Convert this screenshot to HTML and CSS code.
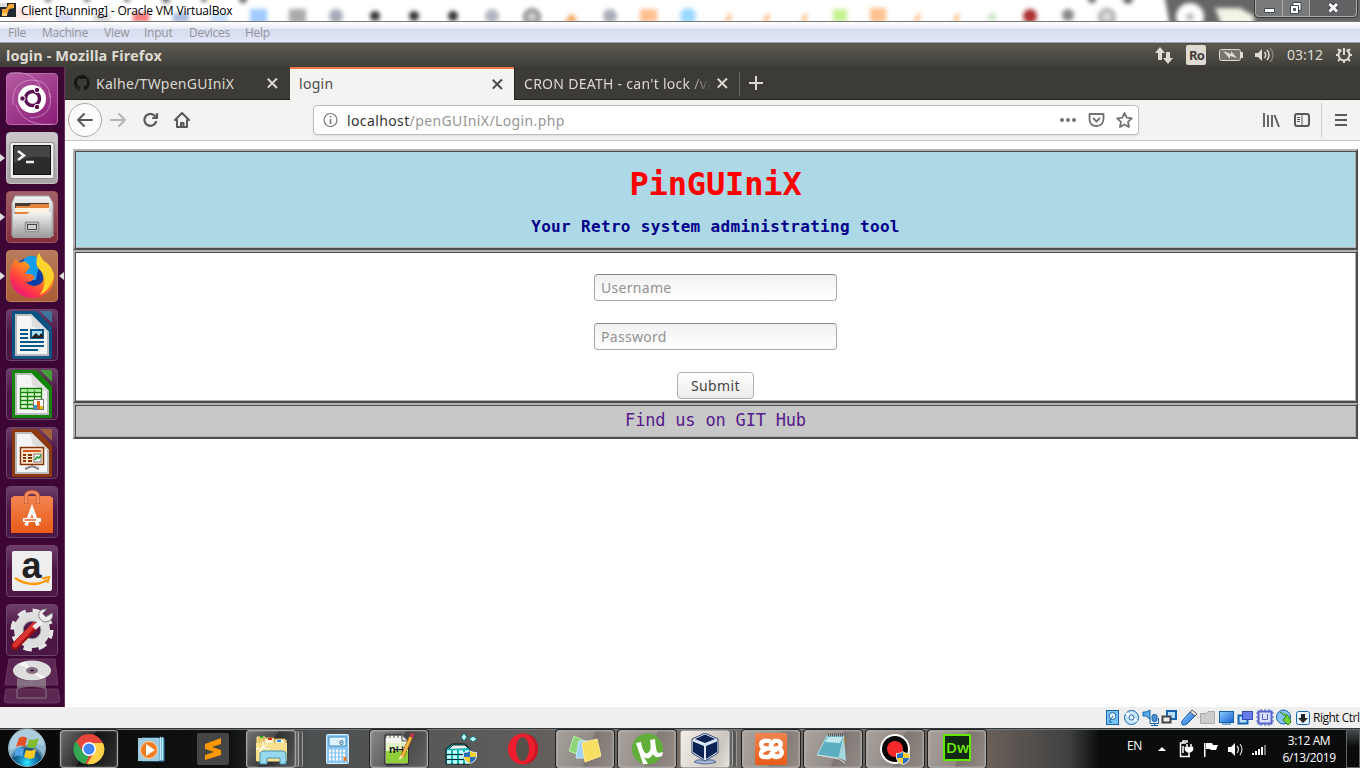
FILE: index.html
```html
<!DOCTYPE html>
<html lang="en">
<head>
<meta charset="utf-8">
<title>login</title>
<link rel="stylesheet" href="styles.css">
</head>
<body>
<svg class="defs" aria-hidden="true"><defs>
<filter id="soft" x="-50%" y="-50%" width="200%" height="200%"><feGaussianBlur stdDeviation="2"/></filter>
<linearGradient id="silver" x2="0" y2="1"><stop stop-color="#f4f4f4"/><stop offset="1" stop-color="#999"/></linearGradient>
<linearGradient id="orange" x2="0" y2="1"><stop stop-color="#f28450"/><stop offset="1" stop-color="#e95b18"/></linearGradient>
<radialGradient id="orb" cx=".5" cy=".9"><stop stop-color="#2ff0ff"/><stop offset=".35" stop-color="#1791c7"/><stop offset=".75" stop-color="#195079"/><stop offset="1" stop-color="#8cbbd2"/></radialGradient>
<linearGradient id="fox" x1=".9" y1="0" x2=".2" y2="1"><stop stop-color="#fff44f"/><stop offset=".4" stop-color="#ff9a1a"/><stop offset=".75" stop-color="#ff3647"/><stop offset="1" stop-color="#e31587"/></linearGradient>
<linearGradient id="blue" x2="1" y2="1"><stop stop-color="#8fd0ff"/><stop offset="1" stop-color="#1560d0"/></linearGradient>
<g id="shield"><path d="M0 2Q5 2 7 0Q9 2 14 2V7Q13 12 7 14Q1 12 0 7Z" fill="#ddd"/><path d="M1 3Q5 3 7 1V7H1Z" fill="#2670bd"/><path d="M7 1Q9 3 13 3V7H7Z" fill="#f7cf31"/><path d="M1 7H7V13Q2 11 1 7Z" fill="#f7cf31"/><path d="M7 7H13Q12 11 7 13Z" fill="#2670bd"/></g>
<g id="paper"><path d="M7 3H30L45 19V49H7Z" stroke="currentColor" stroke-width="2" stroke-linejoin="round" fill="currentColor"/><path d="M9 5H25L43 23V47H9Z" fill="#b9bcbd"/><path d="M11 7H24L41 24V45H11Z" fill="#f5f5f5"/><path d="M25 5L43 23H38L26 17Z" fill="#dedede"/><path d="M34 2H44Q46 2 46 4V14Z" fill="currentColor"/><path d="M34 2H44Q46 2 46 4V14Z" fill="#fff" opacity=".2"/></g>
</defs></svg>

<header class="win-title">
  <svg class="title-haze" viewBox="0 0 1360 21" width="1360" height="21">
    <path d="M1164-6H1366V27H1170Q1168 14 1164-6Z" fill="#666" filter="url(#soft)"/>
    <g filter="url(#soft)">
      <rect x="12" y="8" width="24" height="12" fill="#ffe6e6"/><rect x="56" y="14" width="16" height="7" fill="#d4d4f8"/><rect x="94" y="14" width="16" height="7" fill="#ccc"/><rect x="133" y="13" width="16" height="9" fill="#f47777"/><rect x="173" y="13" width="16" height="9" fill="#a6bade"/><rect x="211" y="13" width="17" height="9" fill="#c6defc"/>
      <rect x="250" y="9" width="17" height="14" fill="#a0cbff"/><rect x="289" y="9" width="17" height="14" fill="#aaa"/><circle cx="336" cy="16" r="7" fill="#a5abb6"/><circle cx="375" cy="16" r="5" fill="#333"/><circle cx="414" cy="16" r="5" fill="#333"/><circle cx="453" cy="16" r="5" fill="#333"/><circle cx="492" cy="16" r="7" fill="#b2b5c0"/><circle cx="532" cy="17" r="7" fill="#ccc" stroke="#888" stroke-width="4"/><path d="M564 22L572 13L578 22Z" fill="#efa45c"/><circle cx="610" cy="16" r="7" fill="#aaadb7"/>
      <rect x="640" y="9" width="17" height="13" fill="#ffc08f"/><circle cx="688" cy="16" r="8" fill="#99d7ff"/><path d="M724 21L731 12V21ZM762 21L769 12V21ZM800 21L807 12V21Z" fill="#ffb77c"/><rect x="833" y="9" width="14" height="13" fill="#c4f291"/><rect x="870" y="8" width="16" height="14" fill="#ffc18e"/><path d="M913 21L920 12V21ZM952 21L959 12V21Z" fill="#ffb77c"/><path d="M986 20L993 11L998 20Z" fill="#cbe3c5"/><circle cx="1030" cy="16" r="7" fill="#aa3030"/><circle cx="1068" cy="15" r="6" fill="#888"/><circle cx="1107" cy="17" r="7" fill="#ddd" stroke="#aaa" stroke-width="4"/><circle cx="1190" cy="17" r="14" fill="#fff"/><circle cx="1190" cy="17" r="4" fill="#bbb"/><path d="M1215 8H1240L1254 16V26H1222Z" fill="#f3f3e6"/>
      <g fill="#666"><circle cx="48" cy="-1" r="3"/><circle cx="87" cy="-1" r="3"/><circle cx="127" cy="-1" r="3"/><circle cx="166" cy="-1" r="4"/><circle cx="204" cy="-1" r="3"/><circle cx="243" cy="-1" r="4"/><circle cx="1092" cy="-1" r="4"/><circle cx="1128" cy="-1" r="5"/></g>
    </g>
  </svg>
  <svg width="16" height="17" viewBox="0 0 16 17"><rect y="3" width="16" height="14" fill="#21272f"/><path d="M2 15H7L9 9L14 8V4H9L6 9H2Z" fill="#f8a636"/><path d="M0 3H7V7H0Z" fill="#ddd"/><path d="M2 13H7V16H2Z" fill="#ffd36a"/></svg>
  <span class="win-caption">Client [Running] - Oracle VM VirtualBox</span>
  <div class="win-buttons">
    <svg width="104" height="19" viewBox="0 0 104 19"><path d="M.5 0V14Q.5 17.500 4 17.500H100Q103.500 17.500 103.500 14V0" fill="#77797b" stroke="#393939"/><path d="M56 0H102V16H56Z" fill="#606264"/><path d="M1.500 0V13Q1.500 16.500 5 16.500H99Q102.500 16.500 102.500 13V0M28.500 0V17M55.500 0V17" fill="none" stroke="#aaa"/><path d="M10.500 8.500H20.500V12.500H10.500Z" fill="#fff" stroke="#414657"/><path d="M39 2.500H47V10.500H39Z" fill="#fff" stroke="#414657"/><path d="M36.500 5.500H44.500V13.500H36.500Z" fill="#fff" stroke="#414657"/><path d="M39.500 8.500H41.500V10.500H39.500Z" fill="#777" stroke="#414657"/><path d="M75.500 4L83 11.500M83 4L75.500 11.500" stroke="#3f4352" stroke-width="5"/><path d="M75.500 4L83 11.500M83 4L75.500 11.500" stroke="#fff" stroke-width="3"/></svg>
  </div>
</header>
<nav class="win-menu"><span class="m1">File</span><span class="m2">Machine</span><span class="m3">View</span><span class="m4">Input</span><span class="m5">Devices</span><span class="m6">Help</span></nav>

<main class="vm">
  <div class="panel">
    <span class="panel-title">login - Mozilla Firefox</span>
    <svg width="210" height="24" viewBox="0 0 210 24" fill="#dfdbd2">
      <path d="M0 10L5 4L10 10H7V17H3V10ZM8 15H11V9H15V15H18L13 21Z"/>
      <rect x="31" y="2" width="20" height="20" rx="2"/><text x="34" y="17" class="ro">Ro</text>
      <rect x="64.500" y="6.500" width="21" height="11" rx="2" fill="#77756f" stroke="#dfdbd2"/><path d="M86 9H88V15H86ZM68 8L76 11V8L82 15L75 13V16Z"/>
      <path d="M100 10H103L107 6V18L103 14H100Z"/><path d="M109.500 9Q112 12 109.500 15M112 7Q116 12 112 17" fill="none" stroke="#dfdbd2" stroke-width="1.500"/><path d="M115 5Q121 12 115 19" fill="none" stroke="#85827b" stroke-width="1.500"/>
      <text x="132" y="17" class="clock" textLength="36">03:12</text>
      <g transform="translate(189 12)" fill="none" stroke="#dfdbd2"><path d="M-2.500-5A5.500 5.500 0 1 0 2.500-5" stroke-width="2"/><path d="M0-7V0" stroke-width="2"/><path d="M-8 0H-5M5 0H8M0 5V8M-6-6L-4-4M6-6L4-4M-6 6L-4 4M6 6L4 4" stroke-width="2"/></g>
    </svg>
  </div>
  <div class="desktop">
    <aside class="launcher">
      <div class="tile dash"><svg viewBox="0 0 52 52"><g fill="none" stroke="#dca4d4" opacity=".65"><path d="M7 32Q5 8 26 7Q44 7 44 25M44 20Q48 44 24 45M4 0Q29-4 37 20M46 51Q18 54 10 32"/></g><circle cx="26" cy="26" r="14" fill="#fff"/><circle cx="26.500" cy="25.500" r="7" fill="none" stroke="#5b1052" stroke-width="3.500"/><g fill="#5b1052" stroke="#fff"><circle cx="16.500" cy="25.500" r="2.700"/><circle cx="31" cy="17" r="2.700"/><circle cx="31" cy="34" r="2.700"/></g></svg></div>
      <div class="tile terminal running"><svg viewBox="0 0 52 52"><rect x="4" y="10.500" width="44" height="36" rx="2" fill="#eee" stroke="#888"/><rect x="7.500" y="13.500" width="37" height="29" fill="#2c2c2c" stroke="#111"/><path d="M8 14H44V26Q25 22 8 31Z" fill="#555" opacity=".6"/><path d="M12 19L18 23.500L12 28M20 30H28" fill="none" stroke="#eee" stroke-width="2.500"/></svg></div>
      <div class="tile files running"><svg viewBox="0 0 52 52"><path d="M9 5H43L47 12V45H6V12Z" fill="url(#silver)" stroke="#aaa"/><rect x="9" y="12" width="34" height="13" fill="#463b35"/><path d="M10 15H23L25 13H43V24H9Z" fill="#e6843f"/><path d="M9 17H43V21H9Z" fill="#fff2dc"/><path d="M7 23H21L24 21H45V47H7Z" fill="url(#silver)"/><rect x="19.500" y="31.500" width="13" height="9" rx="1" fill="#eee" stroke="#999" stroke-width="2"/><rect x="21.500" y="33.500" width="9" height="5" fill="#ccc" stroke="#444"/></svg></div>
      <div class="tile firefox running focused"><svg viewBox="0 0 52 52"><circle cx="26" cy="26" r="19" fill="#063da9"/><path d="M18 9Q26 2 34 10L30 30H12Z" fill="#149dea"/><path d="M10 8Q11 14 15 12Q20 10 24 17L19 24Q25 23 29 27Q25 34 19 31Q26 39 34 34Q40 30 35 21Q27 15 33 3Q35 10 42 14Q49 21 48 29C46 43 36 49 25 48C12 47 4 38 4 27Q4 15 10 8Z" fill="url(#fox)"/><path d="M33 3Q35 10 42 14Q48 21 47 29Q42 42 34 45Q42 32 36 22Q27 14 33 3Z" fill="#ffd42a"/></svg></div>
      <div class="tile writer"><svg viewBox="0 0 52 52"><use href="#paper"/><path d="M14 21H22M14 25H22M14 29H22M14 33H38M14 37H38M14 41H32" stroke="#075989" stroke-width="2"/><rect x="25" y="21" width="12" height="8" fill="#a9dcfa" stroke="#075989" stroke-width="2"/><path d="M26 28L30 24L33 27L35 24L37 26V29H26Z" fill="#222"/></svg></div>
      <div class="tile calc"><svg viewBox="0 0 52 52"><use href="#paper"/><path d="M14.500 20.500H35.500V40.500H14.500ZM14.500 24.500H35.500M14.500 28.500H35.500M14.500 32.500H35.500M14.500 36.500H35.500M21.500 20V41M28.500 20V41" fill="#e5ffdc" stroke="#168009" stroke-width="1.300"/><path d="M15 21H35V24H15Z" fill="#7fdf68" opacity=".5"/><rect x="27.500" y="31.500" width="10" height="10" fill="#fff" stroke="#777"/><path d="M28 37H31V41H28Z" fill="#2d95d9"/><path d="M31 33H34V41H31Z" fill="#e5661b"/><path d="M34 38H37V41H34Z" fill="#e3bb00"/></svg></div>
      <div class="tile impress"><svg viewBox="0 0 52 52"><use href="#paper"/><path d="M14.500 20.500H37.500V37.500H14.500Z" fill="#ffe5cc" stroke="#843409" stroke-width="1.500"/><path d="M17 24H35" stroke="#d6551a" stroke-width="2"/><path d="M17 28H20M17 31H20M17 34H20M22 28H26M22 31H26M22 34H26" stroke="#843409" stroke-width="2"/><rect x="28" y="27" width="7" height="8" fill="#fff" stroke="#777"/><path d="M29 33L31 30L33 31L35 28" stroke="#219e35" fill="none" stroke-width="1.500"/><path d="M26 38V39L19 42M26 39L33 42" stroke="#888" stroke-width="2" fill="none"/></svg></div>
      <div class="tile software"><svg viewBox="0 0 52 52"><path d="M5 12L8 10H44L47 12V47H5Z" fill="url(#orange)"/><path d="M20 18V11Q20 6 26 6Q32 6 32 11V18" fill="none" stroke="#d86735" stroke-width="4"/><path d="M20 17V11Q20 6 26 6Q32 6 32 11V17" fill="none" stroke="#f49169" stroke-width="2"/><path d="M20 39.500L26 23L32 39.500" fill="none" stroke="#fff" stroke-width="3.500"/><path d="M17 34H35" stroke="#fff" stroke-width="4"/><path d="M18.500 34H30" stroke="#ed682d" stroke-width="1.600"/></svg></div>
      <div class="tile amazon"><svg viewBox="0 0 52 52"><rect x="6" y="6" width="40" height="40" rx="2" fill="#eee"/><text x="15.500" y="33" class="amazon-letter">a</text><path d="M9 33Q26 44 41 35" stroke="#ff9900" stroke-width="2.500" fill="none"/><path d="M36 33.500L43 32L41.500 38" stroke="#ff9900" stroke-width="2" fill="none"/></svg></div>
      <div class="tile settings"><svg viewBox="0 0 52 52"><circle cx="26" cy="26" r="18.500" fill="none" stroke="#e5e5e5" stroke-width="6" stroke-dasharray="8 6.530"/><circle cx="26" cy="26" r="13.500" fill="none" stroke="#dedede" stroke-width="9"/><circle cx="26" cy="26" r="9" fill="none" stroke="#aaa"/><path d="M9 42L29 22" stroke="#9e0f0f" stroke-width="7.500" stroke-linecap="round"/><path d="M9 41L28 21" stroke="#d93232" stroke-width="5" stroke-linecap="round"/><path d="M28 24L38 15" stroke="#eee" stroke-width="5"/><path d="M41 5Q31 5 33 13Q36 20 43 17Q48 14 46 9L40 13L36.500 9.500Z" fill="#ededed" stroke="#888"/></svg></div>
      <div class="disc"><svg viewBox="0 0 58 46"><path d="M6 1H52L55 27H2ZM3 31H55L57 42Q57 45 54 45H4Q1 45 1 42Z" fill="#a77c9c" opacity=".3" stroke="#d7a9d1"/><ellipse cx="29" cy="12.500" rx="19" ry="10" fill="#ddd"/><path d="M29 12L15 6L22 4ZM29 13L43 19L38 21Z" fill="#f8f8f8"/><ellipse cx="29" cy="12.500" rx="6" ry="3.500" fill="#877184"/><ellipse cx="29" cy="12.500" rx="2" ry="1" fill="#401038"/><path d="M14 31V40M43 31V40M14 40H43" stroke="#aaa" opacity=".6"/><path d="M14 20Q28 26 43 20V31Q28 27 14 31Z" fill="#aaa" opacity=".55"/></svg></div>
    </aside>
    <section class="browser">
      <div class="tabs">
        <div class="tab"><svg class="github" viewBox="0 0 16 16"><path d="M8 0C3.580 0 0 3.580 0 8c0 3.540 2.290 6.530 5.470 7.590.4.070.55-.17.55-.38V13.700c-2.230.48-2.690-1.070-2.690-1.070-.36-.92-.89-1.170-.89-1.170-.73-.5.050-.49.050-.49.8.06 1.230.83 1.230.83.72 1.220 1.870.87 2.330.66.07-.52.28-.87.51-1.070-1.780-.2-3.640-.89-3.640-3.950 0-.87.31-1.590.82-2.150-.08-.2-.36-1.020.08-2.120 0 0 .67-.21 2.200.82a7.600 7.600 0 0 1 4 0c1.530-1.040 2.200-.82 2.200-.82.44 1.100.16 1.920.08 2.120.51.56.82 1.270.82 2.150 0 3.070-1.870 3.750-3.650 3.950.29.25.54.73.54 1.480v2.200c0 .21.15.46.55.38A8 8 0 0 0 8 0Z" fill="#161616"/></svg><span class="tab-label t1">Kalhe/TWpenGUIniX</span><i class="close"></i></div>
        <div class="tab active"><span class="tab-label t2">login</span><i class="close"></i></div>
        <div class="tab last"><span class="tab-label t3">CRON DEATH - can't lock /var</span><i class="close"></i></div>
        <i class="plus"></i>
      </div>
      <div class="toolbar">
        <svg class="nav-icons" width="130" height="40" viewBox="0 0 130 40"><circle cx="20" cy="20" r="16.500" fill="#fcfcfc" stroke="#aaa8a6"/><g fill="none" stroke="#5a5957" stroke-width="2" stroke-linecap="round" stroke-linejoin="round"><path d="M27 20H13M19 14L13 20L19 26"/><path d="M46 20H60M54 14L60 20L54 26" stroke="#b7b5b3"/><path d="M90 16A6 6 0 1 0 91 22M92 14V18H88" stroke-width="2.200"/><path d="M110 20L117 13L124 20M112 20V27H122V20M116 27V23H118.500V27"/></g></svg>
        <div class="address">
          <svg width="16" height="16" viewBox="0 0 16 16"><circle cx="7.500" cy="8" r="6.500" fill="none" stroke="#777" stroke-width="1.200"/><path d="M7.500 7V12M7.500 4V5.500" stroke="#777" stroke-width="1.600"/></svg>
          <span class="url">localhost<span>/penGUIniX/Login.php</span></span>
          <svg class="address-icons" width="74" height="20" viewBox="0 0 74 20"><g fill="#737373"><circle cx="2" cy="10" r="2"/><circle cx="8" cy="10" r="2"/><circle cx="14" cy="10" r="2"/></g><g fill="none" stroke="#737373" stroke-width="1.800" stroke-linejoin="round"><path d="M29.500 4H43.500V9Q43 16 36.500 16Q29.500 16 29.500 9Z"/><path d="M33 8L36.500 11.500L40 8"/><path d="M64.500 3L66.700 7.700L71.800 8.300L68 11.800L69 17L64.500 14.500L60 17L61 11.800L57.200 8.300L62.300 7.700Z"/></g></svg>
        </div>
        <svg class="toolbar-icons" width="98" height="40" viewBox="0 0 98 40"><path d="M2 13V27M6 15V27M10 15V27M12.500 15L17 27" stroke="#5a5957" stroke-width="1.800"/><rect x="33" y="14" width="14" height="12" rx="2" fill="none" stroke="#5a5957" stroke-width="2"/><path d="M40 14V26M35 17.500H38M35 19.500H38M35 21.500H38" stroke="#5a5957"/><path d="M59.500 3V37" stroke="#cfcdcb"/><path d="M73 15H85M73 20H85M73 25H85" stroke="#5a5957" stroke-width="2"/></svg>
      </div>
      <div class="page">
        <div class="box hero"><h1>PinGUIniX</h1><h2>Your Retro system administrating tool</h2></div>
        <form class="box login"><input type="text" placeholder="Username"><input type="password" placeholder="Password"><button type="button">Submit</button></form>
        <div class="box foot"><a>Find us on GIT Hub</a></div>
      </div>
    </section>
  </div>
</main>

<div class="status">
  <svg width="209" height="21" viewBox="0 0 209 21" fill="none" stroke="#1764ae">
    <g><rect x="2.500" y="3.500" width="12" height="14" fill="#78c5f6"/><circle cx="8.500" cy="9" r="3.500" fill="#e5f6ff"/><path d="M9 9L5 15H8"/></g>
    <g><circle cx="27.500" cy="10.500" r="7" fill="#c7e7fd"/><path d="M22 6L27 10L33 14" stroke="#fff" stroke-width="2"/><circle cx="27.500" cy="10.500" r="2.500" fill="#fff"/></g>
    <path d="M39 5H42L46 3V12L42 9H39Z" fill="#5babe9"/><rect x="48" y="7.500" width="5" height="7" rx="2" fill="#4f8fd0"/><path d="M46 11V16.500H54.500V11M50.500 17V19M47 18.500H54"/>
    <rect x="63" y="4" width="9" height="8" fill="#b6dfff" stroke-width="2"/><rect x="58.500" y="9.500" width="8" height="6" fill="#eee" stroke="#444" stroke-width="2"/>
    <path d="M78 14L86 5L91 9L83 17Q76 20 78 14Z" fill="url(#blue)"/><path d="M86 5L88 3L93 7L91 9Z" fill="#eee" stroke="#555"/>
    <path d="M96.500 16.500V6.500H102L104 4.500H110.500V16.500Z" fill="#ccc" stroke="#aaa"/>
    <rect x="115.500" y="4.500" width="14" height="11" fill="url(#blue)"/><path d="M118 17H127"/>
    <rect x="134.500" y="8.500" width="9" height="8" fill="#b6dfff" stroke-width="2"/><rect x="138.500" y="4.500" width="10" height="8" fill="#677bea" stroke="#3545b5"/>
    <rect x="154.500" y="4.500" width="13" height="12" fill="#dce0ff" stroke="#5562ca" stroke-width="2"/><path d="M152 6H154M152 10H154M152 14H154M168 6H170M168 10H170M168 14H170M157 2V4M161 2V4M165 2V4M157 17V19M161 17V19M165 17V19M158.500 7V12.500H163.500V7" stroke="#5562ca"/>
    <circle cx="179.500" cy="10" r="7" fill="#88bff5"/><path d="M176 5L182 9L179 13L184 18L187 15L185 10L182 7" fill="#79d13a" stroke="#267c22"/>
    <rect x="192.500" y="4.500" width="13" height="13" rx="2" fill="#eaf4ff"/><path d="M197 7H201V11H204L199 16L194 11H197Z" fill="#222" stroke="none"/>
  </svg><span>Right Ctrl</span>
</div>

<footer class="taskbar">
  <div class="start"><svg width="40" height="40" viewBox="0 0 40 40"><circle cx="20" cy="20" r="18.500" fill="url(#orb)" stroke="#91aebc"/><path d="M3 17A17 17 0 0 1 37 17Q22 15 3 22Z" fill="#dcecf3" opacity=".4"/><path d="M12 10Q16 7 20 10L18 19Q14 16 9 19Z" fill="#e65124"/><path d="M22 11Q26 13 32 10L29 19Q25 21 20 19Z" fill="#82bd34"/><path d="M9 21Q13 18 17 21L15 29Q11 26 7 29Z" fill="#52a6e7"/><path d="M19 22Q24 24 29 21L27 30Q22 32 17 29Z" fill="#ffc922"/></svg></div>
  <div class="task dark on"><svg viewBox="0 0 32 32"><circle cx="16" cy="16" r="15" fill="#e8453c"/><path d="M3 8L11 20L16 23L12 31A15 15 0 0 1 3 8Z" fill="#35a853"/><path d="M30 10H17L22 18L14 31A15 15 0 0 0 30 10Z" fill="#ffd348"/><circle cx="16" cy="16" r="7" fill="#fff"/><circle cx="16" cy="16" r="5.500" fill="#4286f5"/></svg></div>
  <div class="task"><svg viewBox="0 0 32 32"><path d="M7 5H29V28H7Z" fill="#75b9db" stroke="#3684b6"/><path d="M25.500 4V27M27.500 4V27" stroke="#c4eaff"/><rect x="3" y="5" width="21" height="23" fill="#9fcbe0"/><circle cx="14" cy="17" r="8.500" fill="#f17b20" stroke="#ffd4a8"/><path d="M11 11L20 17L11 23Z" fill="#fff"/></svg></div>
  <div class="task"><svg viewBox="0 0 32 32"><rect width="32" height="32" rx="2" fill="#454545"/><path d="M8 11L24 5V11L15 14L24 17V22L8 27V22L17 19L8 16Z" fill="#ff9800"/></svg></div>
  <div class="task on stacked"><svg viewBox="0 0 32 32"><path d="M2 4H10L12 7H31V28H2Z" fill="#e9c865" stroke="#ffe89b"/><path d="M9 5H19V11H9ZM20 6H30V12H20Z" fill="#fff4d0" stroke="#c5a64b"/><path d="M5 3H8V5H5Z" fill="#1aaa1a"/><path d="M13 5H17V7H13Z" fill="#e12a1d"/><path d="M22 7H26V9H22Z" fill="#2394eb"/><path d="M1 10H32V28H1Z" fill="#f8df8d"/><path d="M5 31V21Q5 18 10 18H27Q31 18 31 21V31H25V25H12V31Z" fill="#96d8ec" stroke="#4695b1"/><path d="M4 19L8 15M8 15V8M8 15L15 16M8 15L1 16M8 15L13 10" stroke="#fff"/></svg></div>
  <div class="task"><svg viewBox="0 0 32 32"><rect x="5.500" y="1.500" width="22" height="29" rx="1" fill="#8ac5f3" stroke="#d7efff"/><rect x="8" y="4" width="17" height="9" fill="#def4ff" stroke="#418cb9"/><text x="18" y="12" class="zero">0</text><path d="M8 18H25M8 22H25M8 26H25" stroke="#fff" stroke-width="3" stroke-dasharray="2 1.500"/><path d="M24 24V28" stroke="#ef7c20" stroke-width="3"/></svg></div>
  <div class="task on"><svg viewBox="0 0 32 32"><path d="M2 2H19L25 8V31H2Z" fill="#f4f4ee" stroke="#111"/><path d="M3 13H25V30H3Z" fill="#8fcf38"/><path d="M3 10H25V18H3Z" fill="#e1f2c4"/><path d="M3 2V5M7 2V5M11 2V5M15 2V5M19 2V5" stroke="#555"/><path d="M19 2V8H25" fill="#ddd" stroke="#555"/><text x="6" y="20" class="npp">n++</text><path d="M19 24L28 4" stroke="#a86a16" stroke-width="4"/><path d="M19 24L28 4" stroke="#f9ba45" stroke-width="2.500"/><path d="M28 4L30 0" stroke="#b8334b" stroke-width="4"/><path d="M16 27L17 22L20.500 24Z" fill="#ffe4aa"/></svg></div>
  <div class="task"><svg viewBox="0 0 32 32"><path d="M1 16L7 11H20L25 16V31H1Z" fill="#14b4b2" stroke="#021b1b"/><path d="M2 19H24M2 24H24M2 29H24" stroke="#c5ffff" stroke-width="3.500" stroke-dasharray="4 2"/><path d="M4 16L8 12H20L23 15" fill="#eee" stroke="#063232"/><path d="M1 21.500H24M1 26.500H24" stroke="#063232"/><path d="M16 4L19 .5L22 4L19 8ZM24 6L28 3L32 6L28 9Z" fill="#bdf8f4" stroke="#087b7d"/><use href="#shield" x="18" y="17"/></svg></div>
  <div class="task"><svg viewBox="0 0 32 32"><ellipse cx="16" cy="16" rx="15" ry="15.500" fill="#ee1e2f"/><ellipse cx="15.500" cy="16" rx="6.500" ry="12" fill="#56504b"/><path d="M19 1Q31 3 31 16Q30 29 18 31Q30 24 28 12Q26 4 19 1Z" fill="#a90d19" opacity=".55"/></svg></div>
  <div class="task on light"><svg viewBox="0 0 32 32"><path d="M5 3L18 9L13 23L0 18Z" fill="#8ed57b" stroke="#b6efa7"/><path d="M10 8H24V25H7Z" fill="#9fd0f6" stroke="#cbeaff"/><path d="M13 10L28 6L32 23L16 29Z" fill="#f7df61" stroke="#ffed90"/></svg></div>
  <div class="task on light"><svg viewBox="0 0 32 32"><circle cx="16.500" cy="16" r="15.500" fill="#62ae3a"/><path d="M5 10L10 9Q12 22 17 20Q21 18 19 7L24 6Q25 21 28 20L32 19L31 23Q24 26 22 21Q18 28 13 24L17 31H12Z" fill="#fff"/></svg></div>
  <div class="task on stacked white"><svg viewBox="0 0 32 32"><path d="M8 27H24L27 29Q16 33 5 29Z" fill="#aab8d7" stroke="#536d99"/><path d="M3 6L16 0L29 6V20L16 28L3 20Z" fill="#dce5f6" stroke="#364d78"/><path d="M6 6L16 1.500L26 6L16 10ZM4 8.500L15 13V26L4 19ZM17 13L28 8.500V19L17 26Z" fill="#0b2454"/></svg></div>
  <div class="task on light"><svg viewBox="0 0 32 32"><rect width="32" height="32" rx="2" fill="url(#orange)"/><path d="M14 8H9Q5 9 7 14L11 16L7 18Q4 24 10 24H14L17 20H21M16 12L19 8H23Q28 10 24 15Q29 19 25 23Q22 25 18 23M11 15.500H24" fill="none" stroke="#fff" stroke-width="4.500" stroke-linejoin="round" stroke-linecap="round"/><path d="M11 11H12M11 20H12M21 11H22M21 20H22" stroke="#ee6e32" stroke-width="2" stroke-linecap="round"/></svg></div>
  <div class="task on light"><svg viewBox="0 0 32 32"><path d="M25 5L29 4L27 28L22 24Z" fill="#9c722e"/><path d="M10 3H27L22 25L0 22Z" fill="#5dafc0" stroke="#a9e1e8"/><path d="M11 4H26L23 10L8 9Z" fill="#c0e9ef"/><path d="M11 2H27" stroke="#555" stroke-width="3" stroke-dasharray="1"/><path d="M27 4L29 28L22 25Z" fill="#a6d6de"/><path d="M1 22L22 26L28 30" stroke="#ddd" fill="none"/></svg></div>
  <div class="task on light"><svg viewBox="0 0 32 32"><circle cx="16" cy="16" r="15" fill="#fff"/><circle cx="16" cy="16" r="13" fill="#050505"/><circle cx="16" cy="16" r="8" fill="#f3292c"/><use href="#shield" x="17" y="18"/></svg></div>
  <div class="task on light"><svg viewBox="0 0 32 32"><rect x="3" y="2" width="26" height="25" fill="#122913" stroke="#62e900" stroke-width="2"/><text x="5" y="20" class="dw" textLength="23" lengthAdjust="spacingAndGlyphs">Dw</text></svg></div>
  <div class="tray">
    <span class="lang">EN</span>
    <svg width="115" height="40" viewBox="0 0 115 40"><path d="M4 22L8 18L12 22Z" fill="#fff"/><g fill="none" stroke="#fff" stroke-width="1.500"><path d="M32 14H26.500V27.500H36M29 14V12H33V14M29 17V24"/><path d="M33 15V18M37 15V18M31.500 18.500H38.500V21Q35 25 31.500 21ZM35 23V27" fill="#fff"/></g><path d="M50 14H51.500V28H50ZM52 14H58L59 16H64L62 21H57L56 20H52Z" fill="#fff"/><path d="M74 18H77L81 14V27L77 23H74Z" fill="#fff"/><path d="M83 17Q86 20 83 24M86 15Q90 20 86 26" fill="none" stroke="#ddd" stroke-width="1.200"/><path d="M98 24H100V26H98ZM101 22H103V26H101ZM104 20H106V26H104ZM107 18H109V26H107Z" fill="#fff"/><path d="M110 16H112V26H110Z" fill="#777"/></svg>
    <div class="date"><span>3:12 AM</span><span>6/13/2019</span></div>
    <div class="peek"></div>
  </div>
</footer>
</body>
</html>
```
FILE: styles.css
```css
* { box-sizing: border-box; }
body { margin: 0; width: 1360px; height: 768px; overflow: hidden; display: flex; flex-direction: column; font-family: "Noto Sans", "Open Sans", sans-serif; background: #fff; }
svg { display: block; flex: none; }
.defs { position: absolute; width: 0; height: 0; }
.win-title { position: relative; height: 22px; flex: none; display: flex; border-bottom: 1px solid #777; background: #fff; }
.title-haze { position: absolute; left: 0; top: 0; }
.win-title > svg:not(.title-haze), .win-caption, .win-buttons { position: relative; }
.win-caption { margin-left: 5px; font: 12px/21px "Open Sans", sans-serif; letter-spacing: -.16px; white-space: nowrap; color: #000; }
.win-buttons { margin-left: auto; padding-right: 2px; }
.win-menu { height: 21px; flex: none; display: flex; padding-left: 8px; background: linear-gradient(#fff, #e6eaf3 7px, #d5dbee 7px, #e1e7f7 20px); border-bottom: 1px solid #9ba8ba; font: 12px/21px "Open Sans", sans-serif; letter-spacing: -.25px; color: #94959a; }
.m1 { width: 34px; } .m2 { width: 62px; } .m3 { width: 40px; } .m4 { width: 45px; } .m5 { width: 56px; }

.vm { height: 664px; flex: none; }
.panel { height: 24px; display: flex; justify-content: space-between; padding-left: 6px; background: linear-gradient(#5b5950, #3f3e39); border-top: 1px solid #555249; }
.panel > svg { margin-top: -1px; margin-right: -5px; }
.panel-title { font-size: 14.5px; line-height: 22px; font-weight: 700; color: #dfdbd2; letter-spacing: .1px; white-space: nowrap; }
.ro { font: bold 13px "Noto Sans", sans-serif; fill: #3f3e39; letter-spacing: -.8px; }
.clock { font: 14px "Noto Sans", sans-serif; fill: #dfdbd2; }
.desktop { display: flex; height: 640px; }
.launcher { width: 65px; height: 640px; flex: none; overflow: hidden; padding: 6px 0 0 6px; background: #3d0634; border-right: 1px solid #6a315f; display: flex; flex-direction: column; gap: 7px; }
.tile { position: relative; width: 52px; height: 52px; flex: none; border-radius: 4px; background: linear-gradient(#6e3e69, #4e1745 45%, #4b1743); border: 1px solid #6d446a; }
.tile svg { width: 52px; height: 52px; margin: -1px; overflow: visible; }
.dash { background: linear-gradient(145deg, #b45ba1, #8a1d77); border-color: #bb67ab; }
.terminal { background: linear-gradient(#cac6ca, #a7a3a7); border-color: #c5c0c5; }
.files { background: linear-gradient(#a26168, #832d3c); border-color: #9d5662; }
.firefox { background: linear-gradient(#b77c5c, #ab5d36); border-color: #be805c; }
.running::before { content: ""; position: absolute; left: -7px; top: 21px; border: 4px solid transparent; border-left: 5px solid #ddd; border-right: 0; }
.focused::after { content: ""; position: absolute; right: -7px; top: 21px; border: 4px solid transparent; border-right: 5px solid #ddd; border-left: 0; }
.writer { color: #0a5484; } .calc { color: #158509; } .impress { color: #8b3a0d; }
.amazon-letter { font: bold 36px "Liberation Sans", sans-serif; fill: #222; }
.disc { width: 58px; height: 46px; margin: -5px 0 0 -3px; flex: none; }
.disc svg { width: 58px; height: 46px; }

.browser { width: 1295px; flex: none; display: flex; flex-direction: column; }
.tabs { height: 33px; flex: none; display: flex; background: #3c3b37; box-shadow: inset 0 -1px #24231f; }
.tab { width: 225px; height: 33px; display: flex; align-items: center; padding: 0 12px 0 9px; border-bottom: 1px solid #24231f; color: #dcd8d0; }
.tab-label { font-size: 14px; white-space: nowrap; overflow: hidden; line-height: 24px; letter-spacing: .28px; margin-top: 1px; }
.github { width: 16px; height: 16px; margin-right: 6px; }
.active { background: #f4f3f2; color: #4c4c4c; border-top: 2px solid #f07746; border-bottom: 0; width: 224px; padding-right: 11px; }
.active .tab-label { margin-top: -1px; }
.active .close { margin-top: -2px; }
.last { border-left: 1px solid #24231f; position: relative; width: 226px; }
.t3 { width: 189px; -webkit-mask-image: linear-gradient(90deg, #000 164px, transparent 188px); mask-image: linear-gradient(90deg, #000 164px, transparent 188px); }
.last::after { content: ""; position: absolute; right: 0; top: 5px; width: 1px; height: 24px; background: #6a6964; }
.close, .plus { position: relative; width: 12px; height: 12px; margin-left: auto; flex: none; transform: rotate(45deg); }
.close::before, .close::after { content: ""; position: absolute; background: currentColor; left: -.5px; top: 5.200px; width: 13px; height: 1.600px; }
.plus::before, .plus::after { content: ""; position: absolute; background: currentColor; left: -1px; top: 5px; width: 14px; height: 2px; }
.close::after, .plus::after { transform: rotate(90deg); }
.plus { margin: 10px 0 0 10px; transform: none; color: #dcd8d0; }
.toolbar { height: 41px; flex: none; display: flex; align-items: flex-start; background: #f4f3f2; border-bottom: 1px solid #c8c6c4; }
.address { width: 826px; height: 30px; margin: 5px 0 0 118px; display: flex; align-items: center; padding: 0 5px 0 9px; border: 1px solid #bfbdbb; border-radius: 4px; background: #fff; box-shadow: 0 1px 2px #ddd; }
.url { font-size: 14px; color: #333; margin-left: 8px; white-space: nowrap; letter-spacing: .38px; }
.url span { color: #959595; }
.address-icons { margin-left: auto; margin-right: -1px; }
.toolbar-icons { margin-left: 123px; }
.page { height: 566px; padding: 8px 2px 0 8px; background: #fff; }
.box { border: 2px solid; border-color: #b2b2b2 #4c4c4c #4c4c4c #b2b2b2; box-shadow: inset 1px 1px #4c4c4c, inset -1px -1px #b2b2b2; display: flex; flex-direction: column; align-items: center; }
.hero { height: 101px; background: #add8e6; padding-top: 12px; }
h1, h2 { margin: 0; font-family: "DejaVu Sans Mono", monospace; }
h1 { color: red; font-size: 32px; line-height: 43px; letter-spacing: -.15px; }
h2 { color: #00008b; font-size: 16px; line-height: 20px; margin-top: 11px; letter-spacing: .33px; }
.login { height: 153px; margin: 0; padding-top: 22px; gap: 22px; }
input { width: 243px; height: 27px; flex: none; margin: 0; padding: 0 6px; border: 1px solid #aaa; border-top-color: #888; border-radius: 4px; background: linear-gradient(#f1f1f1, #fff); font: 14px "Noto Sans", sans-serif; letter-spacing: .3px; }
input::placeholder { color: #929292; opacity: 1; }
button { width: 77px; height: 27px; flex: none; padding: 0; border: 1px solid #b1afad; border-radius: 4px; background: linear-gradient(#fff, #ecebea); font: 14px "Noto Sans", sans-serif; letter-spacing: .4px; color: #444; }
.foot { height: 36px; background: #c8c8c8; }
.foot a { font: 17px/31px "DejaVu Sans Mono", monospace; color: #551a8b; letter-spacing: -.19px; }

.status { height: 21px; flex: none; background: #efefef; display: flex; justify-content: flex-end; font: 12px/21px "Open Sans", sans-serif; letter-spacing: -.5px; color: #111; white-space: nowrap; }
.status span { width: 47px; }
.taskbar { height: 40px; flex: none; display: flex; gap: 4px; background: linear-gradient(90deg, #080808 0, #101111 230px, #4c4f50 310px, #575857 430px, #605d5b 530px, #796f66 700px, #696461 850px, #695f59 990px, #3e4040 1070px, #0a0b0b 1100px); border-top: 1px solid #30363a; box-shadow: inset 0 1px #777; }
.start { width: 56px; padding-left: 7px; margin-top: -1px; }
.task { width: 58px; height: 38px; margin-top: 1px; flex: none; display: flex; align-items: center; justify-content: center; border-radius: 3px; }
.task svg { width: 32px; height: 32px; margin: -1px 1px 0 0; }
.on { border: 1px solid #a4a4a4; background: linear-gradient(120deg, #aaa9, #7775 45%, #2225 47%, #7775); box-shadow: inset 0 0 2px #fff7, 0 0 0 1px #222; }
.light { background: linear-gradient(110deg, #c6bfb9aa, #b5ada888 55%, #8b827f99 57%, #a79d96aa); }
.white { background: linear-gradient(110deg, #f3eee6, #cac5bd 75%, #e9e3da); }
.stacked { width: 50px; margin-right: 8px; box-shadow: 3px 0 0 -1px #666, 4px 0 0 -1px #aaa, 7px 0 0 -1px #555, 8px 0 0 -1px #999, inset 0 0 2px #fff8; }
.zero { font: 8px "Liberation Mono", monospace; fill: #19467d; }
.npp { font: bold 11px "Liberation Mono", monospace; letter-spacing: -1.500px; fill: #111; }
.dw { font: 600 15px "Open Sans", sans-serif; fill: #70ed00; }
.tray { margin-left: auto; display: flex; width: 233px; flex: none; color: #fff; font: 12px "Open Sans", sans-serif; letter-spacing: -.4px; }
.lang { width: 27px; padding-top: 8px; font-size: 12px; }
.date { display: flex; flex-direction: column; align-items: center; width: 77px; padding: 3px 0 0 3px; line-height: 17px; }
.peek { width: 14px; height: 39px; border: 1px solid #62676a; background: linear-gradient(#484b4c, #0b0b0b 45%); }
```
